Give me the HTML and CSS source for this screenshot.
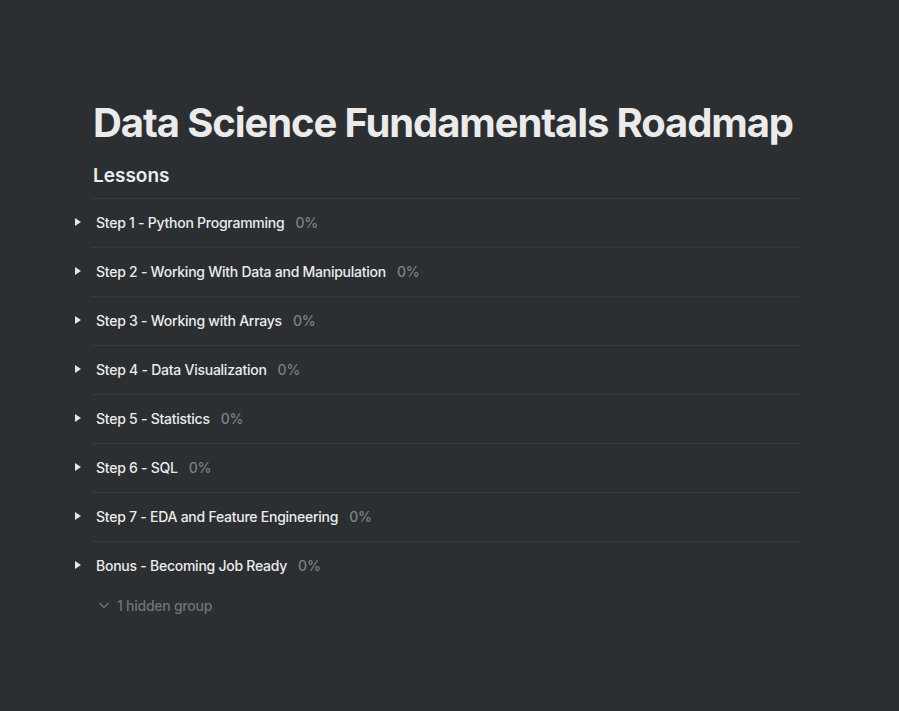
FILE: index.html
```html
<!DOCTYPE html>
<html lang="en">
<head>
  <meta charset="UTF-8" />
  <title>Data Science Fundamentals Roadmap</title>
  <link rel="stylesheet" href="styles.css">
</head>
<body>

<div class="page">
  <h1 class="title">Data Science Fundamentals Roadmap</h1>
  <h2 class="section">Lessons</h2>

  <div class="list">
    <div class="row"><span class="toggle"></span><span class="name">Step 1 - Python Programming</span><span class="pct">0%</span></div>
    <div class="row"><span class="toggle"></span><span class="name">Step 2 - Working With Data and Manipulation</span><span class="pct">0%</span></div>
    <div class="row"><span class="toggle"></span><span class="name">Step 3 - Working with Arrays</span><span class="pct">0%</span></div>
    <div class="row"><span class="toggle"></span><span class="name">Step 4 - Data Visualization</span><span class="pct">0%</span></div>
    <div class="row"><span class="toggle"></span><span class="name">Step 5 - Statistics</span><span class="pct">0%</span></div>
    <div class="row"><span class="toggle"></span><span class="name">Step 6 - SQL</span><span class="pct">0%</span></div>
    <div class="row"><span class="toggle"></span><span class="name">Step 7 - EDA and Feature Engineering</span><span class="pct">0%</span></div>
    <div class="row last"><span class="toggle"></span><span class="name">Bonus - Becoming Job Ready</span><span class="pct">0%</span></div>
  </div>

  <div class="hidden-group">
    <svg width="12" height="12" viewBox="0 0 12 12"><path d="M1.5 4 L6 8.5 L10.5 4" fill="none" stroke="#6f7376" stroke-width="1.3"/></svg>
    <span>1 hidden group</span>
  </div>
</div>

</body>
</html>
```

FILE: styles.css
```css
body {
  margin: 0;
  background-color: #2b2f32;
  font-family: Inter, "Noto Sans", sans-serif;
  color: #ebebeb;
}
.page {
  width: 708px;
  margin-left: 92px;
  padding-top: 96px;
}
.title {
  font-size: 40px;
  font-weight: 700;
  line-height: 54px;
  margin: 0 0 0 1px;
  letter-spacing: -1.1px;
  white-space: nowrap;
  color: #ebebeb;
}
.section {
  font-size: 19px;
  font-weight: 600;
  line-height: 26px;
  margin: 13px 0 9px 1px;
  color: #ebebeb;
}
.list {
  border-top: 1px solid #373b3e;
}
.row {
  position: relative;
  display: flex;
  align-items: center;
  box-sizing: border-box;
  height: 49px;
  padding-bottom: 2px;
  border-bottom: 1px solid #373b3e;
  font-size: 14px;
  font-weight: 500;
  letter-spacing: -0.25px;
}
.row.last {
  border-bottom: none;
}
.toggle {
  position: absolute;
  left: -17px;
  top: 19px;
  width: 0;
  height: 0;
  border-top: 4px solid transparent;
  border-bottom: 4px solid transparent;
  border-left: 6px solid #e6e6e6;
}
.name {
  margin-left: 4px;
  color: #ebebeb;
}
.pct {
  margin-left: 11px;
  color: #7d8184;
}
.hidden-group {
  display: flex;
  align-items: center;
  gap: 7px;
  margin: -1px 0 0 6px;
  height: 30px;
  font-size: 14px;
  font-weight: 500;
  letter-spacing: -0.25px;
  color: #6f7376;
}
```
